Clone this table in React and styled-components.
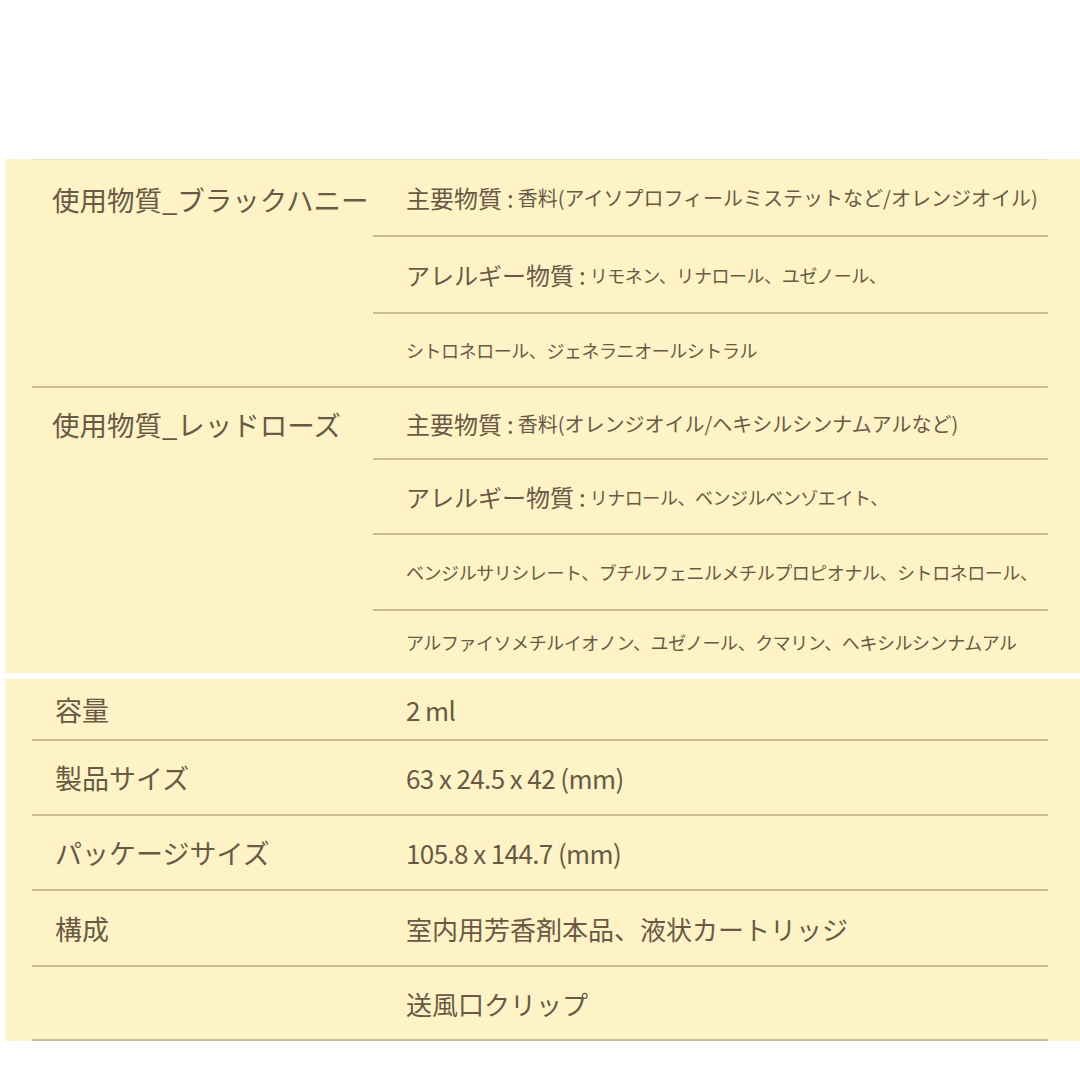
import styled, { createGlobalStyle } from "styled-components";

const GlobalStyle = createGlobalStyle`
  * { box-sizing: border-box; }
  body {
    margin: 0;
    background: #ffffff;
    font-family: "Noto Sans CJK JP", "Noto Sans", sans-serif;
    color: #695a45;
  }
`;

const Page = styled.div`
  width: 1080px;
  height: 1080px;
  padding: 159px 0 0 5px;
  display: flex;
  flex-direction: column;
  gap: 6px;
`;

const Panel = styled.section`
  background: #fdf3c6;
  padding: 0 32px 0 27px;
`;

const Table = styled.div`
  border-top: ${(p) => (p.$topLine ? "1px solid #eee4c2" : "none")};
`;

const Group = styled.div`
  display: grid;
  grid-template-columns: 341px 1fr;
  border-bottom: ${(p) => (p.$last ? "none" : "2px solid #c9bc96")};
`;

const GroupLabel = styled.div`
  height: ${(p) => p.$h}px;
  display: flex;
  align-items: center;
  padding-left: 20px;
  font-size: 27.5px;
  white-space: nowrap;
`;

const SubRows = styled.div`
  display: flex;
  flex-direction: column;
`;

const SubRow = styled.div`
  height: ${(p) => p.$h}px;
  display: flex;
  align-items: center;
  padding-left: 33px;
  white-space: nowrap;
  border-bottom: ${(p) => (p.$line ? "2px solid #c9bc96" : "none")};
`;

const Key = styled.span`
  font-size: 24px;
`;

const Colon = styled.span`
  font-size: 24px;
  margin: 0 4px 0 5px;
`;

const Detail = styled.span`
  font-size: ${(p) => p.$size || 18}px;
  letter-spacing: ${(p) => (p.$size === 20 ? "0px" : "-0.45px")};
`;

const SpecRow = styled.div`
  height: ${(p) => p.$h}px;
  display: grid;
  grid-template-columns: 341px 1fr;
  align-items: center;
  border-bottom: 2px solid #c9bc96;
`;

const SpecLabel = styled.div`
  padding-left: 23px;
  font-size: 27px;
`;

const SpecValue = styled.div`
  padding-left: 33px;
  font-size: 26px;
  letter-spacing: ${(p) => (p.$latin ? "-0.6px" : "0px")};
  white-space: nowrap;
`;

const materials = [
  {
    label: "使用物質_ブラックハニー",
    rows: [
      { h: 77, key: "主要物質", text: "香料(アイソプロフィールミステットなど/オレンジオイル)", size: 20 },
      { h: 77, key: "アレルギー物質", text: "リモネン、リナロール、ユゼノール、" },
      { h: 72, text: "シトロネロール、ジェネラニオールシトラル" },
    ],
  },
  {
    label: "使用物質_レッドローズ",
    rows: [
      { h: 72, key: "主要物質", text: "香料(オレンジオイル/ヘキシルシンナムアルなど)", size: 20 },
      { h: 75, key: "アレルギー物質", text: "リナロール、ベンジルベンゾエイト、" },
      { h: 76, text: "ベンジルサリシレート、ブチルフェニルメチルプロピオナル、シトロネロール、" },
      { h: 62, text: "アルファイソメチルイオノン、ユゼノール、クマリン、ヘキシルシンナムアル" },
    ],
  },
];

const specs = [
  { h: 62, label: "容量", value: "2 ml", latin: true },
  { h: 75, label: "製品サイズ", value: "63 x 24.5 x 42 (mm)", latin: true },
  { h: 75, label: "パッケージサイズ", value: "105.8 x 144.7 (mm)", latin: true },
  { h: 76, label: "構成", value: "室内用芳香剤本品、液状カートリッジ" },
  { h: 74, label: "", value: "送風口クリップ" },
];

function App() {
  return (
    <>
      <GlobalStyle />
      <Page>
        <Panel>
          <Table $topLine>
            {materials.map((g, gi) => (
              <Group key={g.label} $last={gi === materials.length - 1}>
                <div>
                  <GroupLabel $h={g.rows[0].h}>{g.label}</GroupLabel>
                </div>
                <SubRows>
                  {g.rows.map((r, ri) => (
                    <SubRow key={ri} $h={r.h} $line={ri < g.rows.length - 1}>
                      {r.key && (
                        <>
                          <Key>{r.key}</Key>
                          <Colon>:</Colon>
                        </>
                      )}
                      <Detail $size={r.size}>{r.text}</Detail>
                    </SubRow>
                  ))}
                </SubRows>
              </Group>
            ))}
          </Table>
        </Panel>
        <Panel>
          {specs.map((s, i) => (
            <SpecRow key={i} $h={s.h}>
              <SpecLabel>{s.label}</SpecLabel>
              <SpecValue $latin={s.latin}>{s.value}</SpecValue>
            </SpecRow>
          ))}
        </Panel>
      </Page>
    </>
  );
}

export default App;
